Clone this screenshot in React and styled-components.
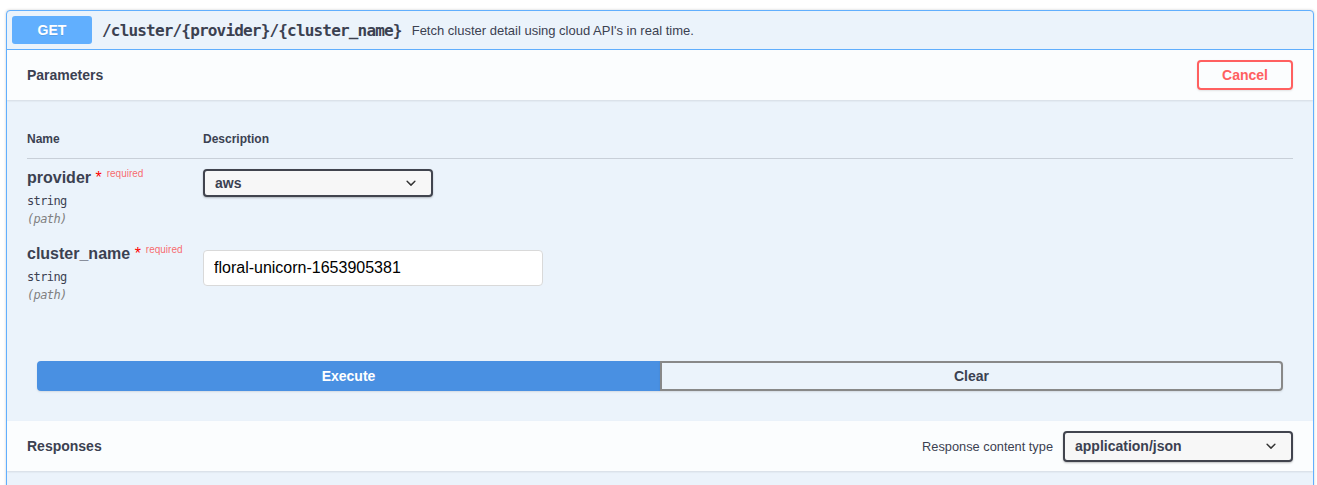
import React from "react";
import styled, { createGlobalStyle } from "styled-components";

const GlobalStyle = createGlobalStyle`
  body {
    margin: 0;
    background: #fff;
    font-family: "Liberation Sans", Arial, sans-serif;
    color: #3b4151;
  }
`;

const Opblock = styled.div`
  width: 1308px;
  margin: 10px 0 0 6px;
  box-sizing: border-box;
  border: 1px solid #61affe;
  border-radius: 4px;
  background: #ebf3fb;
  box-shadow: 0 0 3px rgba(0, 0, 0, 0.19);
  overflow: hidden;
`;

const Summary = styled.div`
  display: flex;
  align-items: center;
  padding: 5px;
  border-bottom: 1px solid #61affe;
`;

const Method = styled.span`
  width: 80px;
  height: 28px;
  line-height: 28px;
  border-radius: 3px;
  background: #61affe;
  color: #fff;
  font-size: 14px;
  font-weight: 700;
  text-align: center;
  text-shadow: 0 1px 0 rgba(0, 0, 0, 0.1);
`;

const Path = styled.span`
  padding: 0 10px;
  font-family: "DejaVu Sans Mono", "Liberation Mono", monospace;
  font-size: 16px;
  font-weight: 700;
  letter-spacing: -0.82px;
  color: #3b4151;
`;

const SummaryDesc = styled.span`
  flex: 1;
  font-size: 13px;
  color: #3b4151;
`;

const SectionHeader = styled.div`
  display: flex;
  align-items: center;
  min-height: 50px;
  padding: 0 20px;
  background: rgba(255, 255, 255, 0.8);
  box-shadow: 0 1px 2px rgba(0, 0, 0, 0.1);
`;

const SectionTitle = styled.h4`
  flex: 1;
  margin: 0;
  font-size: 14px;
  font-weight: 700;
  color: #3b4151;
`;

const CancelButton = styled.button`
  height: 30px;
  padding: 0 23px;
  border: 2px solid #ff6060;
  border-radius: 4px;
  background: transparent;
  color: #ff6060;
  font-family: "Liberation Sans", Arial, sans-serif;
  font-size: 14px;
  font-weight: 700;
  box-shadow: 0 1px 2px rgba(0, 0, 0, 0.1);
`;

const TableContainer = styled.div`
  padding: 20px 20px 20px;
`;

const ParamTable = styled.div`
  display: grid;
  grid-template-columns: 176px 1fr;
`;

const HeadCell = styled.div`
  padding: 12px 0;
  font-size: 12px;
  font-weight: 700;
  color: #3b4151;
  border-bottom: 1px solid rgba(59, 65, 81, 0.2);
`;

const Cell = styled.div`
  padding: 10px 0 9px;
`;

const ParamName = styled.div`
  font-size: 16px;
  font-weight: 700;
  line-height: 18px;
  color: #3b4151;

  span {
    color: red;
    font-weight: 400;
  }

  small {
    position: relative;
    top: -6px;
    padding: 5px;
    font-size: 10px;
    font-weight: 400;
    color: rgba(255, 0, 0, 0.6);
  }
`;

const ParamType = styled.div`
  padding: 5px 0;
  font-family: "DejaVu Sans Mono", "Liberation Mono", monospace;
  font-size: 12px;
  line-height: 14px;
  letter-spacing: -0.6px;
  color: #3b4151;
`;

const ParamIn = styled.div`
  font-family: "DejaVu Sans Mono", "Liberation Mono", monospace;
  font-size: 12px;
  line-height: 13px;
  font-style: italic;
  letter-spacing: -0.6px;
  color: #808080;
`;

const SelectBox = styled.div`
  position: relative;
  width: ${(p) => p.$width}px;
  height: ${(p) => p.$height}px;
  box-sizing: border-box;
  display: flex;
  align-items: center;
  padding: 0 40px 0 10px;
  border: 2px solid #41444e;
  border-radius: 4px;
  background: #f7f7f7;
  box-shadow: 0 1px 2px 0 rgba(0, 0, 0, 0.25);
  font-size: 14px;
  font-weight: 700;
  color: #3b4151;

  svg {
    position: absolute;
    right: 10px;
    top: 50%;
    transform: translateY(-50%);
  }
`;

const TextInput = styled.input`
  width: 340px;
  height: 36px;
  box-sizing: border-box;
  margin: 5px 0;
  padding: 8px 10px;
  border: 1px solid #d9d9d9;
  border-radius: 4px;
  background: #fff;
  font-family: "Liberation Sans", Arial, sans-serif;
  font-size: 16px;
  color: #000;
  outline: none;
`;

const ButtonGroup = styled.div`
  display: flex;
  padding: 30px;
`;

const GroupButton = styled.button`
  flex: 1 1 0;
  height: 30px;
  box-sizing: border-box;
  font-family: "Liberation Sans", Arial, sans-serif;
  font-size: 14px;
  font-weight: 700;
  border: 2px solid ${(p) => (p.$primary ? "#4990e2" : "#888")};
  border-radius: ${(p) => (p.$primary ? "4px 0 0 4px" : "0 4px 4px 0")};
  background: ${(p) => (p.$primary ? "#4990e2" : "transparent")};
  color: ${(p) => (p.$primary ? "#fff" : "#3b4151")};
  box-shadow: 0 1px 2px rgba(0, 0, 0, 0.1);
`;

const ContentType = styled.label`
  display: flex;
  align-items: center;
  gap: 10px;
  font-size: 12.8px;
  color: #3b4151;
`;

const ResponsesBody = styled.div`
  height: 40px;
`;

const Chevron = () => (
  <svg width="20" height="20" viewBox="0 0 20 20">
    <path
      fill="#333"
      d="M13.418 7.859a.695.695 0 01.978 0 .68.68 0 010 .969l-3.908 3.83a.697.697 0 01-.979 0l-3.908-3.830a.68.68 0 010-.969.695.695 0 01.978 0L10 11l3.418-3.141z"
    />
  </svg>
);

function Param({ name, control }) {
  return (
    <>
      <Cell>
        <ParamName>
          {name}&nbsp;<span>*</span>
          <small>required</small>
        </ParamName>
        <ParamType>string</ParamType>
        <ParamIn>(path)</ParamIn>
      </Cell>
      <Cell>{control}</Cell>
    </>
  );
}

export default function App() {
  return (
    <>
      <GlobalStyle />
      <Opblock>
        <Summary>
          <Method>GET</Method>
          <Path>/cluster/&#8203;{"{provider}"}/&#8203;{"{cluster_name}"}</Path>
          <SummaryDesc>Fetch cluster detail using cloud API's in real time.</SummaryDesc>
        </Summary>
        <SectionHeader>
          <SectionTitle>Parameters</SectionTitle>
          <CancelButton>Cancel</CancelButton>
        </SectionHeader>
        <TableContainer>
          <ParamTable>
            <HeadCell>Name</HeadCell>
            <HeadCell>Description</HeadCell>
            <Param
              name="provider"
              control={
                <SelectBox $width={230} $height={28}>
                  aws
                  <Chevron />
                </SelectBox>
              }
            />
            <Param
              name="cluster_name"
              control={<TextInput defaultValue="floral-unicorn-1653905381" />}
            />
          </ParamTable>
        </TableContainer>
        <ButtonGroup>
          <GroupButton $primary>Execute</GroupButton>
          <GroupButton>Clear</GroupButton>
        </ButtonGroup>
        <SectionHeader>
          <SectionTitle>Responses</SectionTitle>
          <ContentType>
            Response content type
            <SelectBox $width={230} $height={31}>
              application/json
              <Chevron />
            </SelectBox>
          </ContentType>
        </SectionHeader>
        <ResponsesBody />
      </Opblock>
    </>
  );
}
